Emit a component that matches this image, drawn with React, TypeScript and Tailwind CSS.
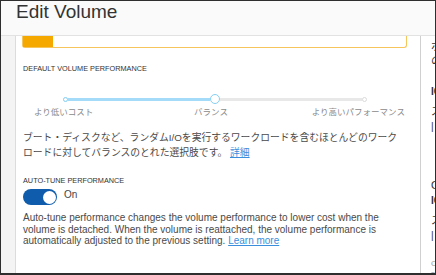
export default function App() {
  return (
    <div className="w-[436px] h-[275px] overflow-hidden border border-b-2 border-[#2e2e2e] bg-white flex flex-col font-['Liberation_Sans','Noto_Sans_CJK_JP',sans-serif]">
      <div className="h-[35px] shrink-0 bg-[#fafafa] border-b border-[#e2e2e2] pl-[15px] text-[19px] leading-[22px] text-[#333]">
        Edit Volume
      </div>
      <div className="flex flex-1 min-h-0">
        <div className="w-[15px] shrink-0 bg-[#f4f4f4] border-r border-[#dcdcdc]" />
        <div className="w-[405px] shrink-0 border-r border-[#d0d0d0] pl-[7px] pr-[13px]">
          <div className="-ml-px w-[385px] h-[12px] border-x border-b border-[#f6c65c] rounded-b-[3px]">
            <div className="w-[30px] h-[11px] bg-[#f5a800]" />
          </div>

          <div className="mt-[16px] text-[7.3px] leading-[10px] text-[#333] uppercase">
            Default Volume Performance
          </div>

          {/* performance slider */}
          <div className="mt-[20px] ml-[39.5px] flex items-center h-[10px]">
            <div className="w-[5px] h-[5px] shrink-0 rounded-full bg-white border border-[#82cdf2]" />
            <div className="w-[142.5px] h-[3px] bg-[#a3dbf8]" />
            <div className="w-[10px] h-[10px] shrink-0 rounded-full bg-white border-[1.5px] border-[#86cff4]" />
            <div className="w-[141.5px] h-[3px] bg-[#e8e8e8]" />
            <div className="w-[5px] h-[5px] shrink-0 rounded-full bg-white border border-[#dadada]" />
          </div>
          <div className="mt-[3px] -ml-[8px] flex gap-[50px] text-[8.5px] leading-[11px] text-[#8a8a8a] whitespace-nowrap">
            <span className="w-[100px] text-center">より低いコスト</span>
            <span className="w-[100px] text-center">バランス</span>
            <span className="w-[100px] text-center">より高いパフォーマンス</span>
          </div>

          <p className="mt-[12px] w-[378px] text-[9.8px] leading-[15px] text-[#4a4a4a]">
            ブート・ディスクなど、ランダムI/Oを実行するワークロードを含むほとんどのワークロードに対してバランスのとれた選択肢です。{" "}
            <a className="text-[#3a8edb] underline">詳細</a>
          </p>

          <div className="mt-[16px] text-[7.3px] leading-[10px] text-[#333] uppercase">
            Auto-tune Performance
          </div>

          <div className="mt-[3px] flex items-start gap-[7px]">
            <div className="w-[34px] h-[16px] rounded-full bg-[#0e5cab] flex items-center justify-end pr-[1.5px]">
              <div className="w-[13px] h-[13px] rounded-full bg-white" />
            </div>
            <span className="text-[10px] leading-[12px] text-[#444]">On</span>
          </div>

          <p className="mt-[7px] w-[372px] text-[10px] leading-[11.7px] text-[#4a4a4a]">
            Auto-tune performance changes the volume performance to lower cost when the volume is detached. When the volume is reattached, the volume performance is automatically adjusted to the previous setting.{" "}
            <a className="text-[#3a8edb] underline">Learn more</a>
          </p>
        </div>

        <div className="flex-1 overflow-hidden pl-[10px] whitespace-nowrap text-[#333]">
          <div className="mt-[3px] w-[60px] whitespace-normal text-[11px] leading-[15px]">ボリュームの概要</div>
          <div className="mt-[17px] text-[10px] leading-[12px] font-bold">IOPS</div>
          <div className="mt-[6px] text-[10px] leading-[15px]">スループット</div>
          <div className="text-[10px] leading-[15px]">| 480 MB/s</div>
          <div className="mt-[44px] text-[11px] leading-[15px]">Oracle</div>
          <div className="mt-[2px] text-[10px] leading-[12px] font-bold">IOPS</div>
          <div className="mt-[6px] text-[10px] leading-[15px]">スループット</div>
          <div className="text-[10px] leading-[15px]">| 120 MB/s</div>
          <div className="mt-[16px] text-[8px] leading-[10px] text-[#999]">Cost</div>
          <div className="text-[8px] leading-[10px] text-[#999]">saved</div>
          <div className="text-[8px] leading-[10px] text-[#999]">auto</div>
        </div>
      </div>
    </div>
  );
}
